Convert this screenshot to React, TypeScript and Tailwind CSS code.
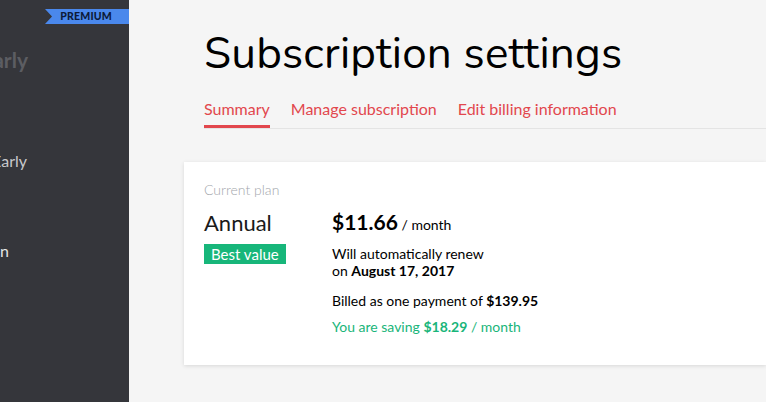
const tabs = ["Summary", "Manage subscription", "Edit billing information"]

const SideItem = ({ label, end, className }: { label: string; end: string; className: string }) => {
  return (
    <div className={`flex justify-end ${end}`}>
      <span className={`shrink-0 whitespace-nowrap ${className}`}>{label}</span>
    </div>
  )
}

const Sidebar = () => {
  return (
    <aside className="relative h-full w-[129px] shrink-0 overflow-hidden bg-[#35363b]">
      <div className="absolute right-0 top-[9px] flex h-[15px] w-[84px] items-center justify-end bg-[#4a88ec] pr-[17px] [clip-path:polygon(0_0,100%_0,100%_100%,0_100%,7px_50%)]">
        <span className="text-[10.5px] font-black leading-none tracking-[0.2px] text-[#0d1b3a]">
          PREMIUM
        </span>
      </div>

      <nav className="flex flex-col pt-[46px]">
        <SideItem
          label="Yearly"
          end="w-[28px]"
          className="text-[21px] font-bold leading-[28px] text-[#5c5d62]"
        />
        <SideItem
          label="Early"
          end="mt-[76px] w-[27px]"
          className="text-[16px] leading-[22px] text-[#c8c9cc]"
        />
        <SideItem
          label="Plan"
          end="mt-[68px] w-[9px]"
          className="text-[16px] leading-[22px] text-[#e6e6e8]"
        />
      </nav>
    </aside>
  )
}

const App = () => {
  return (
    <div className="flex h-[402px] w-[766px] overflow-hidden bg-[#f5f5f5] font-['Lato',sans-serif]">
      <Sidebar />

      <main className="flex min-w-0 flex-1 flex-col pl-[75px] pt-[27px]">
        <h1 className="font-['Nunito','Noto_Sans',sans-serif] text-[44px] font-normal leading-[54px] tracking-[0.2px] text-black">
          Subscription settings
        </h1>

        <div className="mt-[17px] flex gap-[21px] border-b border-[#e4e4e4]">
          {tabs.map((tab, i) => (
            <span
              key={tab}
              className={
                i === 0
                  ? "border-b-[3px] border-[#e2474d] pb-[6px] text-[16px] leading-[21px] text-[#e2474d]"
                  : "pb-[6px] text-[16px] leading-[21px] text-[#e2474d]"
              }
            >
              {tab}
            </span>
          ))}
        </div>

        <section className="-ml-[20px] mt-[33px] flex h-[203px] bg-white pl-[20px] pt-[19px] shadow-[0_1px_4px_rgba(0,0,0,0.12)]">
          <div className="w-[128px] shrink-0">
            <p className="text-[14px] font-light leading-[18px] text-[#a3a6ab]">Current plan</p>
            <p className="mt-[10px] text-[22px] leading-[28px] text-[#1a1a1a]">Annual</p>
            <span className="mt-[7px] inline-block bg-[#17b67a] px-[7px] text-[15px] leading-[20px] text-white">
              Best value
            </span>
          </div>

          <div className="pt-[29px] text-[14px] text-black">
            <p className="leading-[24px]">
              <span className="text-[21px] font-bold">$11.66</span> / month
            </p>
            <p className="mt-[8px] leading-[17px]">Will automatically renew</p>
            <p className="leading-[17px]">
              on <span className="font-bold">August 17, 2017</span>
            </p>
            <p className="mt-[13px] leading-[17px]">
              Billed as one payment of <span className="font-bold">$139.95</span>
            </p>
            <p className="mt-[9px] leading-[17px] text-[#19b57a]">
              You are saving <span className="font-bold">$18.29</span> / month
            </p>
          </div>
        </section>
      </main>
    </div>
  )
}

export default App
